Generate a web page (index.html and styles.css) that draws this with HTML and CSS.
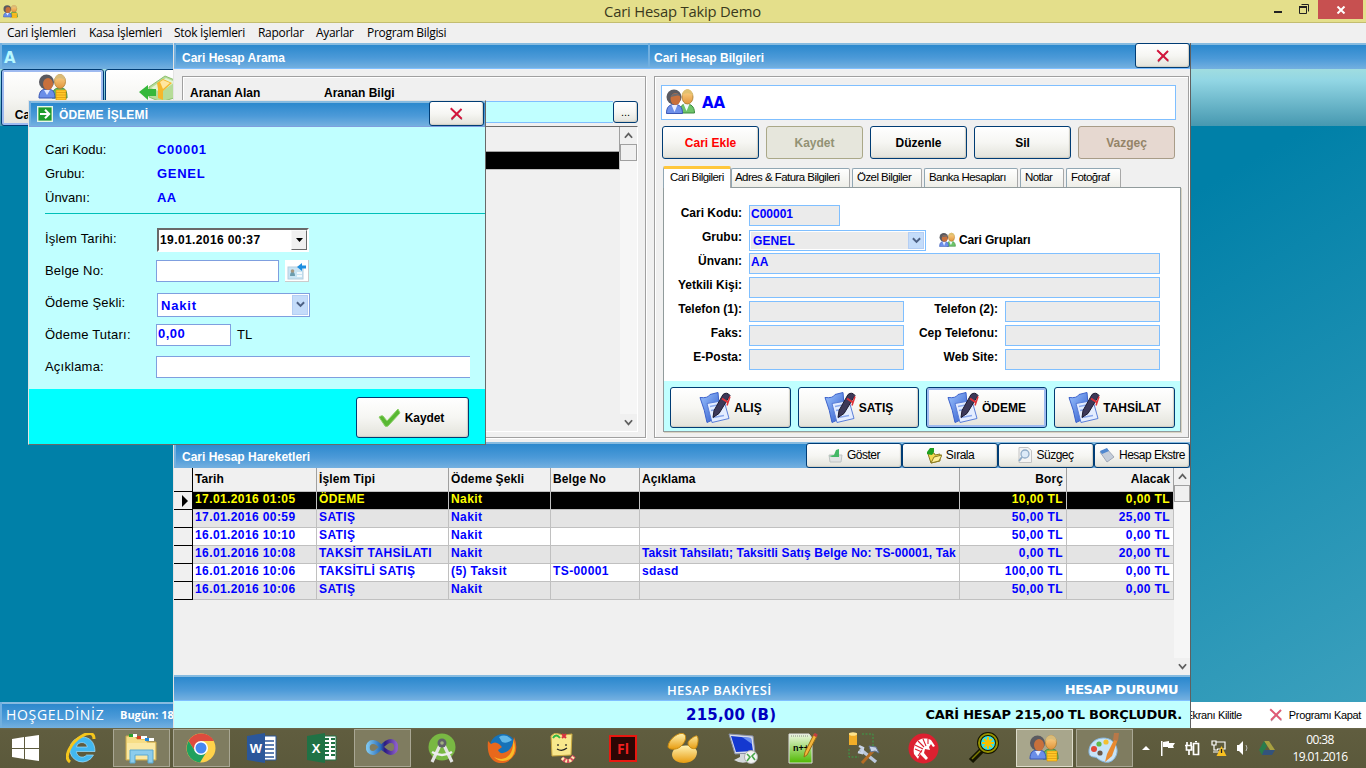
FILE: index.html
```html
<!DOCTYPE html>
<html lang="tr">
<head>
<meta charset="utf-8">
<title>Cari Hesap Takip Demo</title>
<link rel="stylesheet" href="styles.css">
</head>
<body>
<svg class="defs" width="0" height="0">
  <defs>
    <linearGradient id="gBlue" x1="0" y1="0" x2="1" y2="1"><stop offset="0" stop-color="#9cc4ff"/><stop offset="1" stop-color="#2a55c8"/></linearGradient>
    <linearGradient id="gSkin" x1="0" y1="0" x2="0" y2="1"><stop offset="0" stop-color="#ffd58a"/><stop offset="1" stop-color="#e0953c"/></linearGradient>
    <linearGradient id="gGold" x1="0" y1="0" x2="0" y2="1"><stop offset="0" stop-color="#fff2b0"/><stop offset="1" stop-color="#e89c10"/></linearGradient>
    <linearGradient id="gGreen" x1="0" y1="0" x2="0" y2="1"><stop offset="0" stop-color="#eef8e0"/><stop offset="1" stop-color="#4fb800"/></linearGradient>
    <linearGradient id="gInf" x1="0" y1="0" x2="1" y2="0"><stop offset="0" stop-color="#7cc4ee"/><stop offset=".45" stop-color="#2a6cb8"/><stop offset=".6" stop-color="#2c1a80"/><stop offset="1" stop-color="#8a5cc8"/></linearGradient>
  </defs>
  <symbol id="people" viewBox="0 0 30 26">
    <path d="M14 25c0-7 3-9 7-9s8 2 8 9z" fill="#6ec46a" stroke="#3b8a3e"/>
    <path d="M18 16h6l-3 7z" fill="#eefaff"/>
    <ellipse cx="22" cy="9" rx="5.500" ry="7" fill="url(#gSkin)" stroke="#a8782c" stroke-width=".8"/>
    <path d="M16.500 8c0-9 11-9 11 0-2-3-8-4-11 0z" fill="#e0c070"/>
    <path d="M1 25.500c0-7 3-9 8-9s8 2 8 9z" fill="#6e90ea" stroke="#3a57b4"/>
    <path d="M6 17h6l-3 7z" fill="#e8eeff"/>
    <circle cx="8.500" cy="9" r="7.500" fill="#5a5a60"/>
    <ellipse cx="10" cy="11" rx="5" ry="6" fill="#c8703c"/>
    <path d="M5 9c1-4 8-5 10-1l-3-.5z" fill="#6b6b70"/>
  </symbol>
  <symbol id="peopleCoins" viewBox="0 0 30 28">
    <path d="M14 25c0-8 3-10 8-10s7 2 7 10z" fill="#6cc05c" stroke="#3b8a3e"/>
    <ellipse cx="22" cy="8.500" rx="5.500" ry="7" fill="url(#gSkin)" stroke="#b07c30" stroke-width=".8"/>
    <path d="M16.500 8c0-9 11-9 11 0-2-3-8-4-11 0z" fill="#d9bb78"/>
    <path d="M1 25c0-7 3-9 8-9s8 2 8 9z" fill="#6a8ee8" stroke="#3a57b4"/>
    <circle cx="8.500" cy="9" r="7.500" fill="#5a5a60"/>
    <ellipse cx="10" cy="11" rx="5" ry="6" fill="#c8703c"/>
    <path d="M6 17h6l-3 5z" fill="#dfe8ff"/>
    <path d="M18 17h10v10H18z" fill="#ffc828" stroke="#d88e00" stroke-width=".6"/>
    <path d="M18 19.500h10M18 22h10M18 24.500h10" stroke="#e09c10" stroke-width=".8"/>
  </symbol>
  <symbol id="cross" viewBox="0 0 14 14"><path d="M2 2l10.500 10.500M12 2.500L2 13" stroke="#888" stroke-width="1.200" fill="none"/><path d="M1.200 1.200l11 10.500M12 1.800L2 12" stroke="#d6143c" stroke-width="1.900" fill="none"/></symbol>
  <symbol id="docpen" viewBox="0 0 32 32">
    <path d="M1 6q8 1 10-3l8-2 2 24-13 6q-2-12-7-25z" fill="url(#gBlue)" stroke="#3c62cc"/>
    <path d="M8 12l17-3 5 18-17 4z" fill="#e4edff" stroke="#5a7ed8"/>
    <path d="M11 15l10-2M12 19l10-2M14 26l11-2" stroke="#8aa8ec" stroke-width="1.500"/>
    <path d="M14 26l1-7L24 3q4-3 7 1L20 22z" fill="#3c3858" stroke="#1c1a30"/>
    <path d="M23 7l6 4" stroke="#e03038" stroke-width="2"/><path d="M31 5l-3 9" stroke="#e03038" stroke-width="1.500"/>
  </symbol>
  <symbol id="chev" viewBox="0 0 10 7"><path d="M1 1l4 4 4-4" fill="none" stroke="#4d6185" stroke-width="2.200"/></symbol>
  <symbol id="up" viewBox="0 0 10 7"><path d="M1 6l4-4.500 4 4.500" fill="none" stroke="#606060" stroke-width="2"/></symbol>
  <symbol id="down" viewBox="0 0 10 7"><path d="M1 1l4 4.500 4-4.500" fill="none" stroke="#606060" stroke-width="2"/></symbol>
</svg>

<div class="screen">
  <header class="titlebar">
    <svg class="app-icon" viewBox="0 0 30 28"><use href="#peopleCoins"/></svg>
    <span class="app-title">Cari Hesap Takip Demo</span>
    <div class="win-btns">
      <svg width="54" height="22" viewBox="0 0 54 22"><path d="M10 12h8" stroke="#222" stroke-width="2"/><path d="M37.500 4.500h7v7M35.500 7.500h7v6h-7z" stroke="#222" fill="none"/><path d="M35 7h8" stroke="#222" stroke-width="2"/></svg>
      <div class="win-close"><svg width="10" height="8" viewBox="0 0 10 8"><path d="M1.500 .5l7 7M8.500 .5l-7 7" stroke="#fff" stroke-width="2"/></svg></div>
    </div>
  </header>
  <nav class="menu"><span class="m1">Cari İşlemleri</span><span class="m2">Kasa İşlemleri</span><span class="m3">Stok İşlemleri</span><span class="m4">Raporlar</span><span class="m5">Ayarlar</span><span class="m6">Program Bilgisi</span></nav>
  <main class="workspace">
    <div class="bar top-bar">A</div>
    <div class="toolbar">
      <button class="btn tool focus"><svg width="30" height="28"><use href="#peopleCoins"/></svg><span>Cari İşlemleri</span></button>
      <button class="btn tool"><svg width="40" height="30" viewBox="0 0 40 30"><path d="M12 14L28 3l12 5v16l-16 5-12-5z" fill="#b6dc98" stroke="#8cc070"/><path d="M14 15l15-10 9 4-14 10z" fill="#e4f4d2"/><path d="M20 10l6-4 9 4-9 8v9l-5-2v-9z" fill="#f5b72c"/><path d="M23 9l3-2 7 3-7 6z" fill="#ffe6a0"/><path d="M2 19l9-7v4h8v7h-8v4z" fill="#35b83a"/></svg></button>
    </div>
    <div class="desktop"></div>
    <footer class="status">
      <div class="bar status-left"><span class="welcome">HOŞGELDİNİZ</span><span>Bugün: 18.01.2016</span></div>
      <div class="status-right"><span class="lock">Ekranı Kilitle</span><svg width="14" height="14" opacity=".7"><use href="#cross"/></svg><span class="quit">Programı Kapat</span></div>
    </footer>
  </main>

  <section class="child">
    <div class="heads"><div class="bar head-left">Cari Hesap Arama</div><div class="bar head-right">Cari Hesap Bilgileri<button class="btn close"><svg width="14" height="14"><use href="#cross"/></svg></button></div></div>
    <div class="upper">
      <div class="group search">
        <div class="search-labels"><span class="sl1">Aranan Alan</span><span>Aranan Bilgi</span></div>
        <div class="search-row"><div class="search-input"></div><button class="btn dots">...</button></div>
        <div class="list"><div class="list-body"><div class="list-head"></div><div class="list-sel"></div></div>
          <div class="scroll"><div class="arrow"><svg width="9" height="7"><use href="#up"/></svg></div><div class="thumb"></div><div class="space"></div><div class="arrow"><svg width="9" height="7"><use href="#down"/></svg></div></div></div>
      </div>
      <div class="group info">
        <div class="name-box"><svg width="31" height="26"><use href="#people"/></svg><span>AA</span></div>
        <div class="actions"><button class="btn red">Cari Ekle</button><button class="btn off">Kaydet</button><button class="btn">Düzenle</button><button class="btn">Sil</button><button class="btn off pink">Vazgeç</button></div>
        <div class="tabs"><div class="tab t1">Cari Bilgileri</div><div class="tab t2">Adres &amp; Fatura Bilgileri</div><div class="tab t3">Özel Bilgiler</div><div class="tab t4">Banka Hesapları</div><div class="tab t5">Notlar</div><div class="tab t6">Fotoğraf</div></div>
        <div class="tab-body">
          <div class="fields">
            <label>Cari Kodu:</label><div class="fld code">C00001</div>
            <label>Grubu:</label><div class="pair"><div class="sel"><span>GENEL</span><i><svg width="9" height="7"><use href="#chev"/></svg></i></div><svg class="grp" width="17" height="15"><use href="#people"/></svg><b>Cari Grupları</b></div>
            <label>Ünvanı:</label><div class="fld">AA</div>
            <label>Yetkili Kişi:</label><div class="fld"></div>
            <label>Telefon (1):</label><div class="duo"><div class="fld"></div><label>Telefon (2):</label><div class="fld"></div></div>
            <label>Faks:</label><div class="duo"><div class="fld"></div><label>Cep Telefonu:</label><div class="fld"></div></div>
            <label>E-Posta:</label><div class="duo"><div class="fld"></div><label>Web Site:</label><div class="fld"></div></div>
          </div>
          <div class="ops">
            <button class="btn"><svg width="32" height="33"><use href="#docpen"/></svg>ALIŞ</button>
            <button class="btn"><svg width="32" height="33"><use href="#docpen"/></svg>SATIŞ</button>
            <button class="btn focus"><svg width="32" height="33"><use href="#docpen"/></svg>ÖDEME</button>
            <button class="btn"><svg width="32" height="33"><use href="#docpen"/></svg>TAHSİLAT</button>
          </div>
        </div>
      </div>
    </div>
    <div class="bar moves"><span>Cari Hesap Hareketleri</span>
      <div class="moves-btns">
        <button class="btn thin"><svg width="15" height="15" viewBox="0 0 15 15"><path d="M1 7h13l-1 7H2z" fill="#e2e4e4" stroke="#c0c4c4"/><path d="M1 8l5-1 2-5 3-1v8H4z" fill="#44b866"/></svg>Göster</button>
        <button class="btn thin"><svg width="16" height="17" viewBox="0 0 16 17"><path d="M2 7l6-1 1 2 5-1v7l-9 2z" fill="#f4d850" stroke="#8a7a20"/><path d="M5 16l3-6 8-2-3 6z" fill="#fff09a" stroke="#8a7a20"/><path d="M1 5l3-4h4v4l-2 3-5-1z" fill="#1fa020"/></svg>Sırala</button>
        <button class="btn thin"><svg width="14" height="16" viewBox="0 0 14 16"><path d="M1 .5h9l3.500 3v12H1z" fill="#f4f4f4" stroke="#c4c4c4"/><circle cx="7" cy="7" r="4" fill="#dceaf8" stroke="#90acc8" stroke-width="1.300"/><path d="M4 10l-3 4" stroke="#90acc8" stroke-width="2"/></svg>Süzgeç</button>
        <button class="btn thin"><svg width="16" height="15" viewBox="0 0 16 15"><path d="M1 4l7-3 7 8-7 5z" fill="#c4cdda" stroke="#a0a8b8"/><path d="M1 3l7-3 2 3-7 3z" fill="#5088d0"/></svg>Hesap Ekstre</button>
      </div>
    </div>
    <div class="grid-wrap">
      <div class="grid">
        <div class="row hdr"><i></i><span>Tarih</span><span>İşlem Tipi</span><span>Ödeme Şekli</span><span>Belge No</span><span>Açıklama</span><span class="r">Borç</span><span class="r">Alacak</span></div>
        <div class="row cur"><i><svg width="6" height="12"><path d="M0 0l6 6-6 6z"/></svg></i><span>17.01.2016 01:05</span><span>ÖDEME</span><span>Nakit</span><span></span><span></span><span class="r">10,00 TL</span><span class="r">0,00 TL</span></div>
        <div class="row alt"><i></i><span>17.01.2016 00:59</span><span>SATIŞ</span><span>Nakit</span><span></span><span></span><span class="r">50,00 TL</span><span class="r">25,00 TL</span></div>
        <div class="row"><i></i><span>16.01.2016 10:10</span><span>SATIŞ</span><span>Nakit</span><span></span><span></span><span class="r">50,00 TL</span><span class="r">0,00 TL</span></div>
        <div class="row alt"><i></i><span>16.01.2016 10:08</span><span>TAKSİT TAHSİLATI</span><span>Nakit</span><span></span><span class="desc">Taksit Tahsilatı; Taksitli Satış Belge No: TS-00001, Tak</span><span class="r">0,00 TL</span><span class="r">20,00 TL</span></div>
        <div class="row"><i></i><span>16.01.2016 10:06</span><span>TAKSİTLİ SATIŞ</span><span>(5) Taksit</span><span>TS-00001</span><span>sdasd</span><span class="r">100,00 TL</span><span class="r">0,00 TL</span></div>
        <div class="row alt"><i></i><span>16.01.2016 10:06</span><span>SATIŞ</span><span>Nakit</span><span></span><span></span><span class="r">50,00 TL</span><span class="r">0,00 TL</span></div>
      </div>
      <div class="scroll"><div class="arrow"><svg width="9" height="7"><use href="#up"/></svg></div><div class="thumb"></div><div class="space"></div><div class="arrow"><svg width="9" height="7"><use href="#down"/></svg></div></div>
    </div>
    <div class="bar totals-head"><span class="th1">HESAP BAKİYESİ</span><span class="th2">HESAP DURUMU</span></div>
    <div class="totals"><span class="tv1">215,00 (B)</span><span class="tv2">CARİ HESAP 215,00 TL BORÇLUDUR.</span></div>
  </section>

  <section class="dialog">
    <div class="bar dlg-head"><svg width="16" height="16" viewBox="0 0 16 16"><rect x=".7" y=".7" width="14.600" height="14.600" fill="#1f9c2c" stroke="#e8f8e8" stroke-width="1.400"/><path d="M3 8h9M8 3.800L12.200 8 8 12.200" fill="none" stroke="#fff" stroke-width="2"/></svg><span>ÖDEME İŞLEMİ</span><button class="btn close"><svg width="15" height="14"><use href="#cross"/></svg></button></div>
    <div class="dlg-info"><span>Cari Kodu:</span><b>C00001</b><span>Grubu:</span><b>GENEL</b><span>Ünvanı:</span><b class="tight">AA</b></div>
    <div class="dlg-form">
      <span>İşlem Tarihi:</span><div class="date"><b>19.01.2016 00:37</b><i><svg width="7" height="4"><path d="M0 0h7L3.500 4z"/></svg></i></div>
      <span>Belge No:</span><div class="belge"><div class="inp"></div><div class="pick"><svg width="20" height="17" viewBox="0 0 20 17"><rect x="1" y="4" width="15" height="12" fill="#c8e4f4" stroke="#b4cede"/><path d="M3 13c0-6 5-6 5 0z" fill="#6c9cae"/><circle cx="5.500" cy="8" r="1.800" fill="#a89880"/><path d="M10 10h5M10 13h5" stroke="#fff" stroke-width="1.500"/><path d="M10 4l5-4v2.500h4v3h-4V8z" fill="#1e8fe0"/></svg></div></div>
      <span>Ödeme Şekli:</span><div class="sel dsel"><span>Nakit</span><i><svg width="9" height="7"><use href="#chev"/></svg></i></div>
      <span>Ödeme Tutarı:</span><div class="amount"><div class="inp">0,00</div><span>TL</span></div>
      <span>Açıklama:</span><div class="inp note"></div>
    </div>
    <div class="dlg-foot"><button class="btn"><svg width="23" height="18" viewBox="0 0 23 18"><path d="M1 8q3-2 4-1l4 5L20 0l2 4L10 17q-2 1-3 0z" fill="#58b832" stroke="#8cd068"/></svg>Kaydet</button></div>
  </section>

  <footer class="taskbar">
    <div class="start"><svg width="27" height="26" viewBox="0 0 27 26"><path d="M0 4l12-2v11H0zM13 2l14-2v13H13zM0 14h12v10L0 22zM13 14h14v12l-14-2z" fill="#fff"/></svg></div>
    <div class="slot ie"><svg width="30" height="31" viewBox="0 0 30 31"><path fill-rule="evenodd" d="M16 4a12.500 12.500 0 1 0 11.500 18h-7c-3 4-10 2-10-3.500H29C29 9 23.500 4 16 4zm-5.500 10c1-6 10-6 10.800 0z" fill="#42b8f0" stroke="#a0e0ff" stroke-width=".7"/><path d="M4 29C-3 24 5 9 16 3c6-3.500 12-4 12 3" fill="none" stroke="#f5c61c" stroke-width="3"/></svg></div>
    <div class="slot open"><svg width="33" height="32" viewBox="0 0 33 32"><path d="M1 4h9l2 3h9l1 3h9v18H1z" fill="#f6dd86" stroke="#caa84c"/><path d="M4 2h8v3H4z" fill="#fff"/><path d="M4 2h4v3H4z" fill="#2ca02c"/><path d="M12 4h10v3H12z" fill="#fff"/><path d="M12 4h4v3h-4z" fill="#d84020"/><path d="M20 6h9v3h-9z" fill="#fff"/><path d="M20 6h4v3h-4z" fill="#1e88e0"/><path d="M2 11h28v16H2z" fill="#fae8a4"/><path d="M5 31V18h23v13h-5v-8H10v8z" fill="#8cccec" stroke="#5aa8d0"/></svg></div>
    <div class="slot open"><svg width="30" height="30" viewBox="0 0 30 30"><circle cx="15" cy="15" r="14.500" fill="#ffd24a"/><path d="M2.500 8A14.500 14.500 0 0 1 28 8H15L9 18z" fill="#dd4b3e"/><path d="M2.500 8A14.500 14.500 0 0 0 14 29.500L21 18H9z" fill="#1fa15e"/><circle cx="15" cy="15" r="7" fill="#fff"/><circle cx="15" cy="15" r="5.500" fill="#4688f0"/></svg></div>
    <div class="slot"><svg width="30" height="30" viewBox="0 0 30 30"><path d="M12 3h17v24H12z" fill="#fff" stroke="#2b579a"/><path d="M18 8h9M18 12h9M18 16h9M18 20h9M18 24h9" stroke="#2b579a" stroke-width="1.300"/><path d="M0 3l18-3v30L0 27z" fill="#2b579a"/><text x="9" y="20" class="office">W</text></svg></div>
    <div class="slot"><svg width="30" height="30" viewBox="0 0 30 30"><path d="M12 3h17v24H12z" fill="#fff" stroke="#207245"/><path d="M18 6h4M24 6h4M18 10h4M24 10h4M18 14h4M24 14h4M18 18h4M24 18h4M18 22h4M24 22h4" stroke="#207245" stroke-width="2"/><path d="M0 3l18-3v30L0 27z" fill="#207245"/><text x="9" y="20" class="office">X</text></svg></div>
    <div class="slot open"><svg width="32" height="20" viewBox="0 0 32 20"><path d="M16 10C12 5 9 4 7 4c-7 0-7 11 0 11 6 0 10-12 18-12 7 0 7 12 0 12-4 0-6-3-9-5z" fill="none" stroke="url(#gInf)" stroke-width="4"/></svg></div>
    <div class="slot"><svg width="28" height="31" viewBox="0 0 28 31"><circle cx="14" cy="14" r="13.500" fill="#79b843"/><path d="M14 8l10 21M14 8L4 29" stroke="#e4e4e4" stroke-width="3.200"/><path d="M4 19q10 6 20 0" stroke="#eee" stroke-width="2.500" fill="none"/><circle cx="14" cy="10" r="4.500" fill="#606068"/><circle cx="14" cy="10" r="1.800" fill="#a0b080"/></svg></div>
    <div class="slot"><svg width="30" height="31" viewBox="0 0 30 31"><circle cx="16" cy="14" r="13" fill="#1672b8"/><path d="M12 4q7-4 13 3-5 4-10 2z" fill="#62b8e8"/><path d="M1 8l3 3q4-3 8 0l3 3-4 3q2 5 8 2 7-3 8-15 4 9 1 17-6 10-16 9Q-1 27 1 8z" fill="#e8681c"/><path d="M26 6q5 13-3 20-9 5-16-2 10 5 16-3 4-6 3-15z" fill="#f8bc28"/></svg></div>
    <div class="slot"><svg width="26" height="30" viewBox="0 0 26 30"><path d="M1 3q3-4 8-2l5 1 8-1-1 21L2 23z" fill="#f8e88c" stroke="#c8a840"/><path d="M3 5q3-5 7 0" fill="none" stroke="#30b840" stroke-width="2"/><path d="M12 1l4 4M16 1l-4 4" stroke="#d83040" stroke-width="2"/><path d="M8 11v2M16 11v2M7 16q5 3 10-1" stroke="#202020" stroke-width="1.200" fill="none"/><path d="M12 25q5 5 9 2l3-4" stroke="#d85060" stroke-width="4" fill="none"/><path d="M12 25q5 5 9 2l3-4" stroke="#fff0b0" stroke-width="3" stroke-dasharray="2 2" fill="none"/></svg></div>
    <div class="slot"><svg width="28" height="27" viewBox="0 0 28 27"><rect x="1" y="1" width="26" height="25" fill="#2c0604" stroke="#e81810" stroke-width="2"/><text x="14" y="19" class="flash">Fl</text></svg></div>
    <div class="slot"><svg width="32" height="30" viewBox="0 0 32 30"><path d="M5 22C5 10 29 10 30 19c0 14-24 14-25 3z" fill="url(#gGold)"/><path d="M1 14C1 6 13-2 17 1s0 10-4 13-11 3-12 0zM21 10c0-3 8-8 9-7 2 2 1 9-1 12-3 2-8-1-8-5z" fill="url(#gGold)" stroke="#c88a10"/></svg></div>
    <div class="slot"><svg width="31" height="31" viewBox="0 0 31 31"><path d="M1 1l24 2 2 17-20 1z" fill="#d8dce8" stroke="#8890a8"/><path d="M3 3l20 2 2 13-17 1z" fill="#1438d0"/><path d="M14 4l9 1 1 6z" fill="#6c90f0"/><path d="M6 27l6-3v-3h6v4l4 3q-8 4-16-1z" fill="#d4d8dc"/><circle cx="23" cy="24" r="6.500" fill="#f4f4f4" stroke="#aaa"/><path d="M19 21l3 3-3 4M27 20l-3 3 3 4" fill="none" stroke="#48a848" stroke-width="1.600"/></svg></div>
    <div class="slot"><svg width="30" height="31" viewBox="0 0 30 31"><path d="M1 1h20l3 4v25H1z" fill="url(#gGreen)" stroke="#ddd"/><path d="M3 3h18" stroke="#888" stroke-dasharray="1 1"/><text x="5" y="18" class="npp">n++</text><path d="M16 24l1-5L26 1l3 2-10 19z" fill="#f4b63c" stroke="#9c6c14"/><path d="M26 1l3 2" stroke="#c04040" stroke-width="3"/></svg></div>
    <div class="slot"><svg width="32" height="32" viewBox="0 0 32 32"><path d="M14 2h11v12M1 17v8h10" fill="none" stroke="#38a048" stroke-dasharray="2 1.500"/><path d="M1 1h8v12H1z" fill="#f2ae28"/><ellipse cx="5" cy="2" rx="4" ry="1.800" fill="#ffe48c"/><path d="M12 17l16 13" stroke="#bcc8dc" stroke-width="3.500"/><path d="M26 18L14 31" stroke="#b46c24" stroke-width="3"/><path d="M21 14l7 1 3 6-4-2-4 1z" fill="#c8d4e8" stroke="#60708c"/><path d="M11 14l4 2-1 5-4-1" fill="none" stroke="#c8d4e8" stroke-width="2.500"/></svg></div>
    <div class="slot"><svg width="31" height="31" viewBox="0 0 31 31"><circle cx="15.500" cy="15.500" r="15" fill="#dc2030"/><path d="M6 21C4 10 12 2 23 7l4 6-2 1-2-3-2 3 1 3-5-1-1 4 4 5-2 2-6-6-2 5z" fill="#fff"/><path d="M7 16l7 3M7 12l8 4M10 8l6 6M15 6l3 7M20 6v5M14 17l-4 6" stroke="#dc2030" stroke-width="1.100"/></svg></div>
    <div class="slot"><svg width="32" height="32" viewBox="0 0 32 32"><path d="M3 29L14 18" stroke="#141400" stroke-width="6"/><path d="M4 27l9-9" stroke="#7c7c00" stroke-width="1.500"/><circle cx="20" cy="11" r="9" fill="#30e4e8" stroke="#141400" stroke-width="4"/><circle cx="20" cy="11" r="9" fill="none" stroke="#969200" stroke-width="2"/><path d="M20 5v12M14 11h12M16 7l8 8M24 7l-8 8" stroke="#f8c000" stroke-width="2"/></svg></div>
    <div class="slot open active"><svg width="30" height="28"><use href="#peopleCoins"/></svg></div>
    <div class="slot open"><svg width="34" height="32" viewBox="0 0 34 32"><path d="M2 18C3 8 15 3 24 8c7 5 8 13 3 19-6 7-15 1-17-1s-9 1-8-8z" fill="#c8e4f8" stroke="#84b4dc"/><circle cx="7" cy="17" r="3" fill="#e04838"/><circle cx="12" cy="12" r="2.600" fill="#60b848"/><circle cx="19" cy="10" r="2.600" fill="#f4c030"/><circle cx="13" cy="21" r="2.600" fill="#6c5848"/><path d="M18 30l2-8 8-16 3 1-6 17z" fill="#e88a30"/><path d="M26 8l1-7h5l-1 8z" fill="#b87848"/></svg></div>
    <div class="tray">
      <svg width="8" height="4"><path d="M0 4h8L4 0z" fill="#fff"/></svg>
      <svg width="16" height="16" viewBox="0 0 16 16"><path d="M1 1h1.500v15H1zM3 2l6-1v2h6l-2 3 1 2H8V7H3z" fill="#fff"/></svg>
      <svg width="16" height="15" viewBox="0 0 16 15"><path d="M8.500 2.500h5v11h-5zM10 .5h2M2 1v3M6 1v3M0 4.500h7M1.500 5v4h5V5M4 9v5" fill="none" stroke="#fff" stroke-width="1.700"/></svg>
      <svg width="16" height="16" viewBox="0 0 16 16"><path d="M5 2h9v7H6M1 1h4v4H1zM3 5v5h4M2 12h6" fill="none" stroke="#fff" stroke-width="1.200"/><path d="M10.500 6l5 10h-10z" fill="#f8c020"/><path d="M10.500 9v4" stroke="#222" stroke-width="1.300"/></svg>
      <svg width="14" height="14" viewBox="0 0 14 14"><path d="M1 4h2l4-4v14l-4-4H1z" fill="#fff"/><path d="M10 4q2 3 0 6" fill="none" stroke="#bbb"/></svg>
      <svg width="16" height="14" viewBox="0 0 16 14"><path d="M5 0h5l6 9h-5z" fill="#a8a040"/><path d="M5 0L0 9l3 5 5-9z" fill="#2a7c4c"/><path d="M5 9h11l-3 5H3z" fill="#33537c"/></svg>
    </div>
    <div class="clock"><span>00:38</span><span>19.01.2016</span></div>
  </footer>
</div>
</body>
</html>
```
FILE: styles.css
```css
* { box-sizing: border-box; }
body { margin: 0; overflow: hidden; font: bold 12px/14px "Liberation Sans", Arial, sans-serif; color: #000; }
.defs { display: block; height: 0; }
.screen { position: relative; width: 1366px; height: 768px; overflow: hidden; display: flex; flex-direction: column; }
span, label, b { white-space: nowrap; }
svg { flex: none; }
i { font-style: normal; }

/* main frame */
.titlebar { height: 23px; background: #e4df8b; border-bottom: 1px solid #c3bd70; display: grid; grid-template-columns: 120px 1fr 120px; flex: none; }
.app-icon { width: 15px; height: 15px; margin: 4px 0 0 3px; }
.app-title { text-align: center; font: 14.8px/23px "Open Sans", sans-serif; color: #3a391c; letter-spacing: -.2px; padding-right: 1px; }
.win-btns { display: flex; justify-content: flex-end; padding-right: 3px; }
.win-close { width: 45px; height: 19px; background: #c75050; display: flex; align-items: center; justify-content: center; }
.menu { height: 20px; background: #f0f0f0; display: flex; flex: none; font: 12px/20px "Open Sans", sans-serif; letter-spacing: -.3px; padding-left: 7px; }
.m1 { width: 82px; } .m2 { width: 85px; } .m3 { width: 84px; } .m4 { width: 58px; } .m5 { width: 51px; }
.workspace { height: 685px; display: flex; flex-direction: column; background: #0080a8; flex: none; }
.bar { background: linear-gradient(#86bbe0 0, #86bbe0 2px, #2b88cd 2px, #4c9ad8 60%, #74b0e0 100%); color: #fff; border-left: 2px solid #72b0e0; display: flex; align-items: center; }
.top-bar { height: 26px; color: #b8f8ff; font: bold 15px/24px "DejaVu Sans", sans-serif; padding: 4px 0 0 2px; }
.toolbar { height: 57px; display: flex; gap: 1px; background: linear-gradient(#a0dde0, #92d6e4 20%, #4698b0); padding-left: 1px; }
.desktop { flex: 1; background: linear-gradient(150deg, #0080a8 10%, #3ba0bd 100%) 1191px 0 / 175px 100% no-repeat; }
.status { height: 26px; display: flex; justify-content: space-between; background: #fff; }
.status-left { width: 700px; padding-left: 4px; font-family: "Open Sans", sans-serif; font-size: 11px; }
.welcome { font: 14px/24px "Open Sans", sans-serif; width: 114px; letter-spacing: .7px; }
.status-right { display: flex; align-items: center; font-weight: normal; font-size: 11px; letter-spacing: -.35px; padding-right: 5px; }
.status-right svg { margin: 0 6px 0 27px; }

.btn { font: inherit; margin: 0; padding: 0; border: 1px solid #003c74; border-radius: 3px; background: linear-gradient(#fff, #f6f6f3 50%, #e3e3db); box-shadow: inset -1px -1px 1px #cfcec4; color: #000; display: flex; align-items: center; justify-content: center; }
.btn.focus { box-shadow: inset 0 0 0 2px #9ebaf0; }
.tool { width: 103px; height: 57px; flex-direction: column; justify-content: space-between; padding: 3px 0; }
.close { width: 55px; height: 25px; }

/* account window */
.child { position: absolute; left: 173px; top: 43px; width: 1018px; height: 685px; background: #f0f0f0; border-left: 1px solid #e3e3e3; border-right: 1px solid #606060; display: flex; flex-direction: column; }
.heads { display: flex; height: 26px; flex: none; border-bottom: 1px solid #7fbfff; }
.head-left { width: 474px; padding: 5px 0 0 6px; }
.head-right { flex: 1; padding: 5px 0 0 4px; justify-content: space-between; }
.head-right .close { margin-top: -5px; }
.upper { display: flex; height: 373px; padding: 7px 1px 4px 8px; gap: 8px; flex: none; }
.group { border: 1px solid #a0a0a0; box-shadow: inset 1px 1px #fff, 1px 1px #fff; }
.search { width: 464px; padding: 9px 7px 0 7px; }
.search-labels { display: flex; height: 15px; }
.sl1 { width: 134px; }
.search-row { display: flex; height: 22px; }
.search-input { flex: 1; background: #c0ffff; border: 1px solid #7fbfff; border-right: 0; }
.dots { width: 25px; font-weight: normal; font-size: 11px; }
.list { margin-top: 3px; height: 306px; border: 1px solid #696969; border-right-color: #fff; border-bottom-color: #fff; display: flex; }
.list-body { flex: 1; }
.list-head { height: 25px; border-bottom: 1px solid #a0a0a0; border-right: 1px solid #a0a0a0; }
.list-sel { height: 18px; background: #000; border-bottom: 1px solid #c0c0c0; border-right: 1px solid #c0c0c0; }
.scroll { width: 17px; display: flex; flex-direction: column; background: #f6f6f6; flex: none; }
.arrow { height: 17px; display: flex; align-items: center; justify-content: center; background: #f0f0f0; }
.thumb { height: 17px; border: 1px solid #a0a0a0; background: #f0f0f0; }
.space { flex: 1; }
.info { flex: 1; padding: 8px 7px 0 6px; }
.name-box { height: 35px; width: 515px; border: 1px solid #7fbfff; background: #fff; display: flex; align-items: center; padding-left: 3px; gap: 6px; color: #00f; font: bold 15px/20px "DejaVu Sans", sans-serif; }
.name-box svg { margin-top: -4px; }
.actions { display: grid; grid-template-columns: repeat(5, 97px); gap: 7px; margin: 6px 0 0 1px; height: 33px; }
.btn.red { color: #f00; }
.btn.off { background: #e6e6dc; border-color: #aaa888; box-shadow: none; color: #929274; }
.btn.pink { background: #e6d8d0; border-color: #a89c88; color: #948468; }
.tabs { display: flex; height: 21px; margin: 7px 0 0 2px; font-weight: normal; font-size: 11.5px; letter-spacing: -.55px; }
.tab { height: 19px; margin-top: 2px; border: 1px solid #91a7b4; border-bottom: 0; border-right-color: #a8a8a8; border-radius: 2px 2px 0 0; background: linear-gradient(#fff, #eeeee8); padding: 1px 0 0 4px; white-space: nowrap; margin-right: 2px; }
.t1 { width: 68px; height: 22px; margin: 0; border-top: 3px solid #ffc73c; background: #fff; padding-left: 6px; z-index: 1; }
.t2 { width: 119px; padding-left: 3px; } .t3 { width: 70px; } .t4 { width: 94px; } .t5 { width: 44px; } .t6 { width: 55px; }
.tab-body { margin-left: 2px; width: 518px; height: 245px; background: #fff; border: 1px solid #919b9c; box-shadow: 1px 1px #d8d4c4; display: flex; flex-direction: column; justify-content: space-between; }
.fields { display: grid; grid-template-columns: 78px 411px; column-gap: 7px; row-gap: 3px; grid-auto-rows: 21px; padding-top: 17px; }
.fields label { text-align: right; padding-top: 1px; }
.fld { border: 1px solid #7fbfff; background: #ebebeb; color: #00f; padding: 1px 0 0 1px; height: 21px; }
.code { width: 91px; }
.pair { display: flex; align-items: center; }
.pair b { letter-spacing: -.15px; }
.sel { width: 177px; height: 21px; border: 1px solid #7fbfff; background: #fff; padding: 1px; display: flex; color: #00f; margin-top: 2px; }
.sel span { flex: 1; background: #ebebeb; padding: 2px 0 0 2px; letter-spacing: .1px; }
.sel i { width: 16px; background: #c4dcfa; display: flex; align-items: center; justify-content: center; border: 1px solid #b4cef4; }
.grp { margin: 0 3px 0 13px; }
.duo { display: grid; grid-template-columns: 155px 95px 155px; column-gap: 0; }
.duo .fld:last-child { margin-left: 6px; width: 155px; }
.duo label { padding-right: 1px; }
.ops { height: 50px; background: #c0ffff; display: grid; grid-template-columns: repeat(4, 121px); gap: 7px; padding: 6px 0 3px 6px; }
.ops .btn { gap: 3px; }
.moves { height: 26px; flex: none; justify-content: space-between; padding-left: 6px; }
.moves > span { padding-top: 4px; }
.moves-btns { display: flex; }
.thin { width: 96px; height: 25px; font-weight: normal; font-size: 12px; letter-spacing: -.5px; gap: 4px; }
.grid-wrap { height: 207px; display: flex; flex: none; }
.grid-wrap .scroll { width: 16px; }
.grid { flex: 1; }
.row { display: grid; grid-template-columns: 19px 124px 132px 102px 89px 320px 107px 107px; height: 18px; background: #fff; color: #00f; letter-spacing: .4px; }
.row span { border-right: 1px solid #c0c0c0; border-bottom: 1px solid #c0c0c0; padding-left: 2px; overflow: hidden; }
.row i { background: #f0f0f0; border-right: 1px solid #000; border-bottom: 1px solid #000; display: flex; align-items: center; justify-content: flex-end; padding-right: 4px; }
.row.alt { background: #e4e4e4; }
.row.cur { background: #000; color: #ff0; }
.row.hdr { height: 24px; background: #f0f0f0; color: #000; letter-spacing: .1px; }
.hdr span { border-right-color: #a0a0a0; padding-top: 4px; }
.row .r { text-align: right; padding-right: 3px; }
.row .desc { letter-spacing: .13px; }
.totals-head { height: 26px; flex: none; border-left: 0; border-bottom: 1px solid #7fbfff; display: grid; grid-template-columns: 1fr 1fr; font: 600 13px/22px "Open Sans", sans-serif; padding-top: 4px; }
.th1 { padding-left: 493px; letter-spacing: .35px; }
.th2, .tv2 { text-align: right; padding-right: 12px; }
.th2 { font: bold 13px/22px "DejaVu Sans", sans-serif; letter-spacing: -.45px; }
.totals { flex: 1; background: #c0ffff; display: flex; justify-content: space-between; align-items: center; }
.tv1 { padding-left: 512px; color: #0000c0; font: bold 15px/20px "DejaVu Sans", sans-serif; letter-spacing: .2px; }
.tv2 { padding-right: 8px; font: bold 13px/20px "DejaVu Sans", sans-serif; letter-spacing: -.24px; }

/* payment dialog */
.dialog { position: absolute; left: 28px; top: 100px; width: 458px; height: 345px; background: #c0ffff; border: 1px solid #e3e3e3; border-right-color: #696969; border-bottom-color: #696969; display: flex; flex-direction: column; font-weight: normal; }
.dlg-head { height: 26px; border-bottom: 1px solid #7f9fdf; padding-left: 6px; gap: 6px; font-weight: bold; flex: none; }
.dlg-head span { flex: 1; padding-top: 2px; letter-spacing: .15px; }
.dlg-head .close { margin-right: 1px; }
.dialog .dlg-info, .dialog .dlg-form { font-size: 13px; }
.dlg-info { display: grid; grid-template-columns: 112px 1fr; grid-auto-rows: 24px; line-height: 24px; margin-left: 16px; padding-top: 11px; height: 87px; border-bottom: 1px solid #00c0b8; flex: none; }
.dlg-info b { color: #00f; letter-spacing: .7px; }
.dlg-info .tight { letter-spacing: .4px; }
.dlg-form { display: grid; grid-template-columns: 111px 1fr; grid-auto-rows: 32px; margin: 9px 0 0 16px; flex: 1; align-items: center; }
.dlg-form > span { padding-bottom: 1px; letter-spacing: .2px; }
.date { width: 152px; height: 24px; margin: 2px 0 0 1px; border: 2px solid #696969; border-right-color: #fff; border-bottom-color: #fff; background: #fff; display: flex; font-size: 12px; }
.date b { flex: 1; padding: 3px 0 0 1px; letter-spacing: .4px; }
.date i { width: 16px; background: #f0f0f0; border: 1px solid #f8f8f8; border-right-color: #696969; border-bottom-color: #696969; display: flex; align-items: center; justify-content: center; }
.belge { display: flex; gap: 6px; }
.inp { height: 22px; width: 123px; border: 1px solid #7f9fdf; background: #fff; color: #00f; font-weight: bold; padding: 2px 1px; letter-spacing: .5px; }
.pick { width: 24px; height: 22px; background: #fff; display: flex; align-items: center; justify-content: center; box-shadow: inset -1px -1px #ccc; }
.dsel { width: 153px; height: 24px; margin: 3px 0 0 1px; border-color: #7f9fdf; font-weight: bold; font-size: 13px; }
.dsel span { background: #fff; padding-top: 4px; letter-spacing: .8px; }
.amount { display: flex; gap: 6px; align-items: center; }
.amount .inp { width: 75px; }
.inp.note { width: 314px; border-right: 0; }
.dlg-foot { height: 55px; background: #0ff; display: flex; justify-content: flex-end; padding: 8px 16px 6px; flex: none; }
.dlg-foot .btn { width: 113px; gap: 4px; font-weight: bold; font-size: 12px; letter-spacing: -.1px; padding-right: 3px; }

/* taskbar */
.taskbar { height: 40px; background: linear-gradient(#6c6a4e 0, #605d3f 2px, #5b593b); display: flex; align-items: center; font-weight: normal; flex: none; }
.start { width: 50px; display: flex; justify-content: center; }
.slot { width: 57px; height: 38px; margin: 0 1.6px; display: flex; align-items: center; justify-content: center; flex: none; }
.ie { width: 58px; }
.open { border: 1px solid #a9a794; background: #7f7c60; }
.active { background: #a8a68c; border-color: #dddccb; }
.tray { width: 141px; padding-left: 8px; display: flex; align-items: center; justify-content: space-between; }
.clock { margin-left: 17px; display: flex; flex-direction: column; align-items: center; color: #fff; font: 12px/17px "Open Sans", sans-serif; letter-spacing: -.6px; }
.office { fill: #fff; font: bold 13px "Liberation Sans", sans-serif; text-anchor: middle; }
.flash { fill: #f02020; font: bold 14px "Open Sans", sans-serif; text-anchor: middle; }
.npp { font: bold 9px "Liberation Sans", sans-serif; }
```
